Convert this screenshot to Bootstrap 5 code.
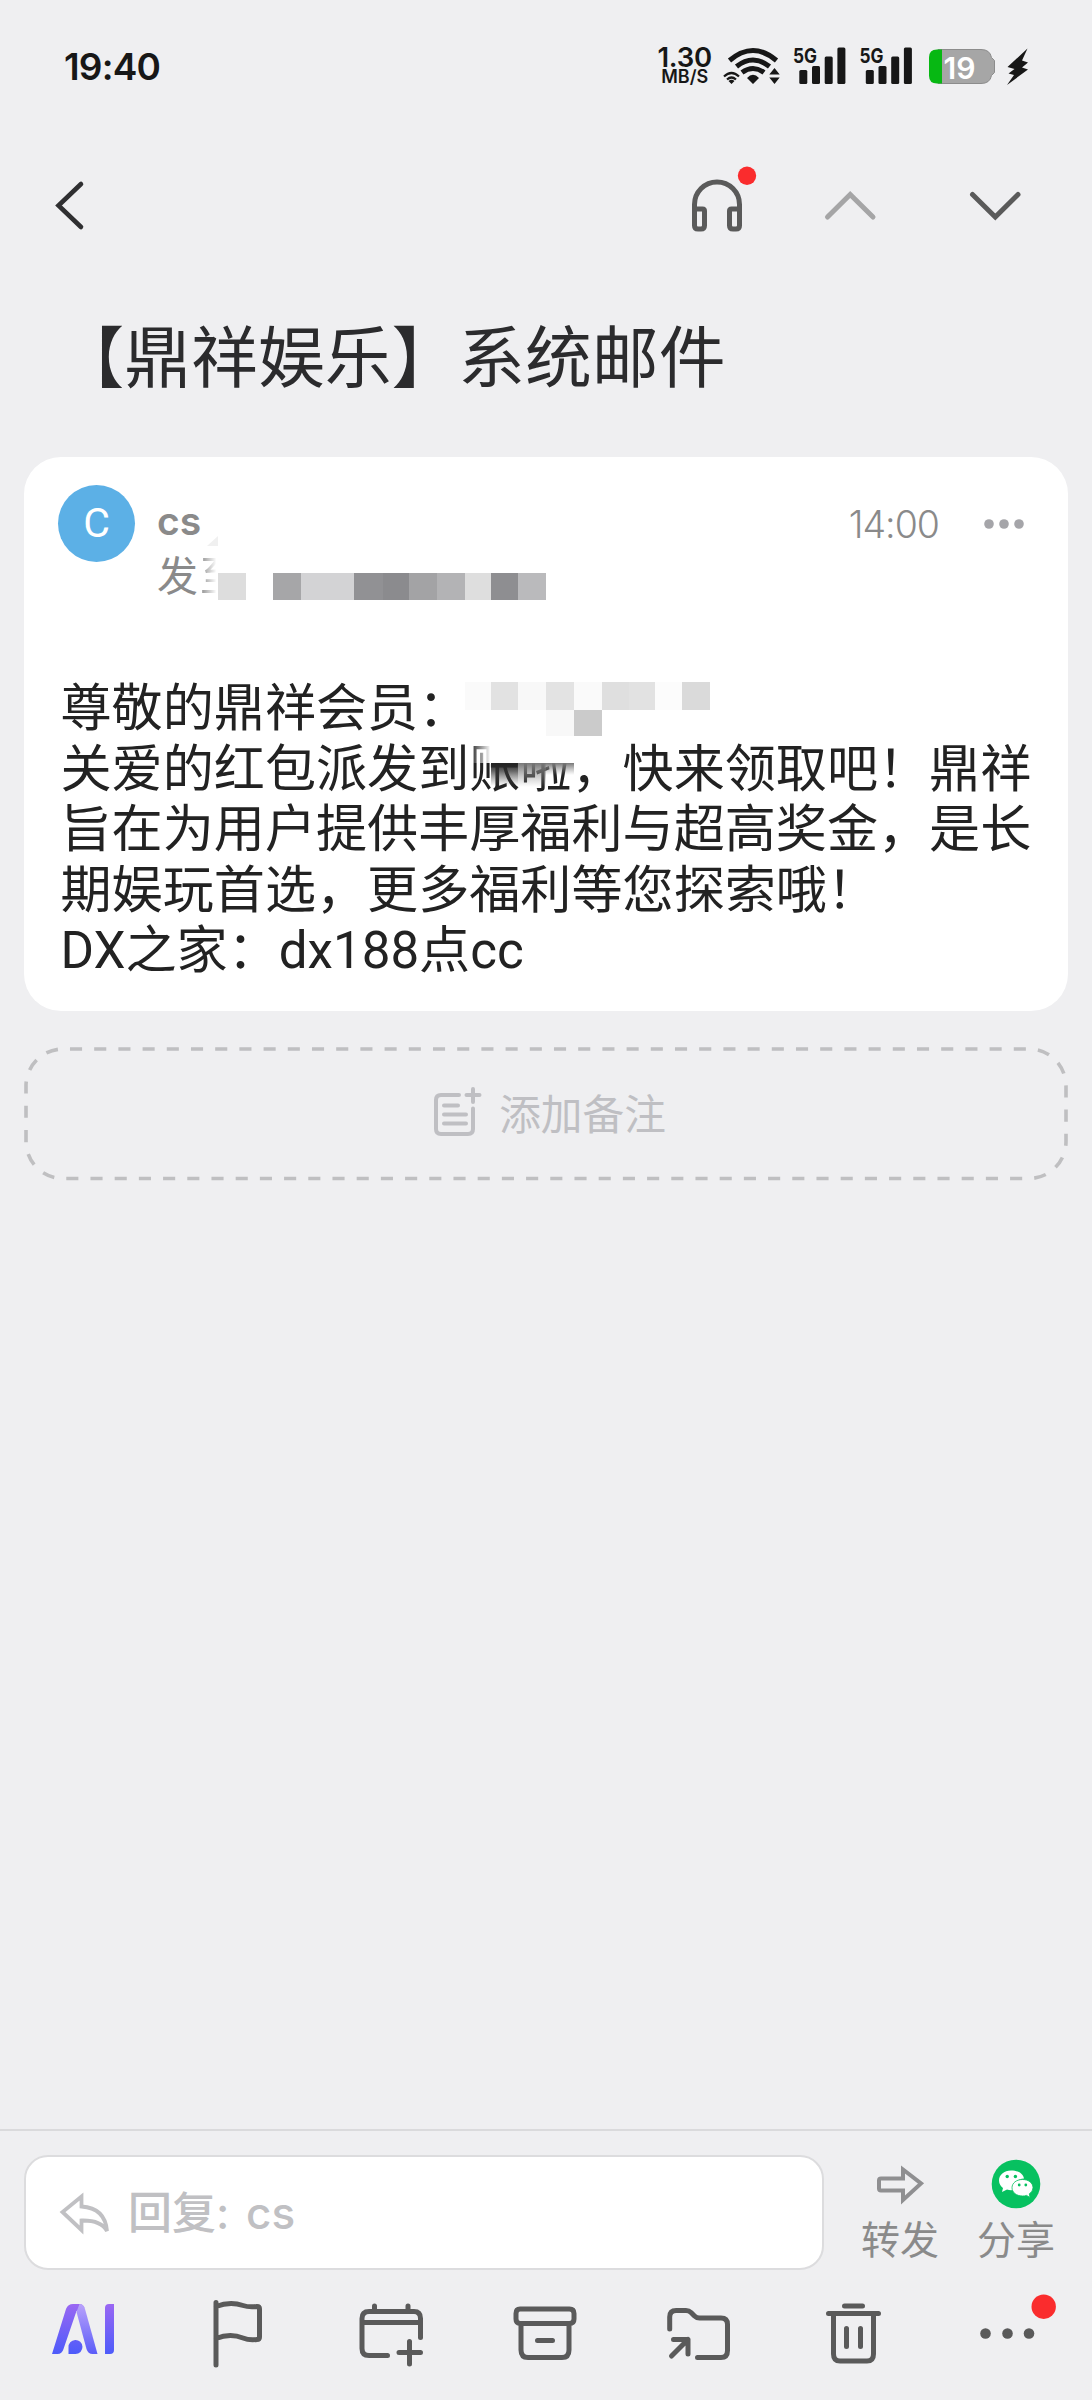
<!DOCTYPE html>
<html lang="zh-CN">
<head>
<meta charset="utf-8">
<meta name="viewport" content="width=device-width, initial-scale=1">
<title>系统邮件</title>
<link rel="stylesheet" href="https://cdn.jsdelivr.net/npm/bootstrap@5.3.0/dist/css/bootstrap.min.css">
<style>
  body { background: #efeff1; color: #2b2b2d; font-family: Inter, "Noto Sans CJK SC", sans-serif; line-height: 1; }
  svg { display: block; flex: none; overflow: visible; }
  .screen { width: 1092px; height: 2400px; }
  .status-bar { height: 132px; padding: 0 64px 0 64px; color: #171717; }
  .clock { font-size: 37px; font-weight: 600; letter-spacing: -.8px; }
  .net-speed { font-size: 27.5px; font-weight: 600; line-height: 21px; height: 22px; letter-spacing: -.2px; }
  .net-unit { font-size: 18px; font-weight: 600; line-height: 16px; height: 16px; }
  .title-bar { height: 148px; padding: 0 66px 0 51px; }
  .subject { height: 177px; padding-left: 57.5px; font-size: 66.8px; line-height: 146px; font-weight: 400; font-family: "Noto Sans CJK SC", sans-serif; white-space: nowrap; }
  .mail { margin: 0 24px; height: 554px; border-radius: 37px; padding: 28px 36px 0 34px; }
  .avatar { width: 77px; height: 77px; background: #5cb0e6; font-size: 41px; font-family: Roboto, sans-serif; }
  .meta { color: #8a8a8a; margin-left: 22px; height: 109px; }
  .sender { font-size: 39px; font-weight: 600; line-height: 48px; margin-top: 12px; }
  .recipient { font-size: 41px; font-weight: 400; line-height: 46px; margin-top: 8px; white-space: nowrap; }
  .faded { -webkit-mask-image: linear-gradient(90deg, #000 0%, transparent 40%); mask-image: linear-gradient(90deg, #000 0%, transparent 40%); margin-left: 2px; }
  .time { font-size: 37.5px; font-weight: 350; color: #8a8a8a; letter-spacing: -1px; margin: 21px 44px 0 auto; }
  .mail-body { margin: 85px -10px 0 2.5px; font-family: Roboto, "Noto Sans CJK SC", sans-serif; font-size: 51.1px; font-weight: 400; line-height: 60.6px; color: #222; white-space: nowrap; }
  .mosaic-a { left: 180px; top: 100px; }
  .mosaic-b { left: 435px; top: 216px; }
  .note { margin: 36px 24px 0; height: 134px; padding-left: 7px; color: #bfbfc3; font-size: 41.7px; font-weight: 400; }
  .note-frame { left: 0; top: 0; }
  .bottom { height: 271px; border-top: 2px solid #dadadc; }
  .composer { padding: 24px 0 0 24px; height: 140px; }
  .reply { width: 800px; height: 115px; border: 2px solid #dcdcde; border-radius: 24px; color: #c0c0c3; font-size: 44px; font-weight: 500; }
  .reply svg { margin-left: 33px; }
  .reply span { margin-left: 17px; white-space: pre; word-spacing: 5px; }
  .act { width: 116px; font-size: 39px; font-weight: 400; color: #8a8a8a; padding-top: 4px; }
  .act span { margin-top: 11px; }
  .act-first { margin-left: 18px; }
  .tools { padding: 0 8px 0 6px; height: 130px; }
</style>
</head>
<body>
<div class="screen d-flex flex-column overflow-hidden">
  <header class="status-bar d-flex justify-content-between align-items-center">
    <div class="clock">19:40</div>
    <div class="d-flex align-items-center">
      <div class="d-flex flex-column align-items-center me-2">
        <span class="net-speed">1.30</span><span class="net-unit">MB/S</span>
      </div>
      <svg width="308" height="40" viewBox="720 46 308 40" fill="#171717" font-family="Inter, sans-serif" font-weight="600">
        <g fill="none" stroke="#171717">
          <path stroke-width="5" d="M729.500 60.500Q753 40.500 776.500 60.500M736.500 66.500Q753 53.500 769.500 66.500M742 72.500Q753 64.500 764 72.500"/>
          <path stroke-width="2.200" d="M724 76.500Q731.500 69.500 739 76.500M727 79.500Q731.500 75.500 736 79.500"/>
        </g>
        <path d="M747 78Q753 71.500 759 78L753 84ZM728.500 81Q731.500 78.500 734.500 81L731.500 84ZM774.500 68l5.200 6.500h-10.400ZM774.500 84l5.200-6.500h-10.400Z"/>
        <g id="sig">
          <text x="793" y="62.500" font-size="20.500" font-weight="700" textLength="24" lengthAdjust="spacingAndGlyphs">5G</text>
          <rect x="799.300" y="70" width="8" height="14" rx="1.500"/><rect x="812" y="66" width="8" height="18" rx="1.500"/><rect x="824.700" y="56.500" width="8" height="27.500" rx="1.500"/><rect x="837.400" y="47.500" width="8" height="36.500" rx="1.500"/>
        </g>
        <use href="#sig" x="66.500"/>
        <path fill="#a6a6a6" stroke="#8c8c8c" d="M938 49.500h43q9 0 10.500 8l3 3v12l-3 3q-1.500 8-10.500 8h-43Z"/>
        <path fill="#07b813" d="M942 49.500h-5q-8 0-8 8v18q0 8 8 8h5Z"/>
        <text x="943.500" y="78.500" font-size="30" fill="#fff" textLength="32" lengthAdjust="spacingAndGlyphs">19</text>
        <path d="M1027.500 48.500L1007.500 67l7 2-6 4.500 5.500 1.500-7 10L1028 69.500l-6-2 6-5-6-2Z"/>
      </svg>
    </div>
  </header>

  <nav class="title-bar d-flex align-items-center justify-content-between">
    <svg width="40" height="60" viewBox="50 176 40 60" fill="none" stroke="#2f2f31" stroke-width="4.600" stroke-linecap="round"><path d="M80 184L57.500 205.500 80 227"/></svg>
    <svg width="340" height="80" viewBox="686 166 340 80" fill="none" stroke="#5a5a5a" stroke-width="5" stroke-linecap="round" stroke-linejoin="round">
      <path d="M694.500 210V204.500a22.500 22.500 0 0 1 45 0V210M694.500 209h8q2 0 2 2v14.500q0 3.500-3.500 3.500h-3q-3.500 0-3.500-3.500ZM739.500 209h-8q-2 0-2 2v14.500q0 3.500 3.500 3.500h3q3.500 0 3.500-3.500Z"/>
      <circle cx="747" cy="175.700" r="9.200" fill="#fa2c2d" stroke="none"/>
      <path stroke="#a5a5a6" stroke-linejoin="miter" d="M827.500 217L850.200 194.500 873 217"/>
      <path stroke-linejoin="miter" d="M972.500 194.500L995.300 217 1018 194.500"/>
    </svg>
  </nav>

  <h1 class="subject m-0">【鼎祥娱乐】系统邮件</h1>

  <article class="mail bg-white position-relative">
    <div class="d-flex align-items-start">
      <div class="avatar rounded-circle text-white d-flex align-items-center justify-content-center">C</div>
      <div class="meta">
        <div class="sender">cs</div>
        <div class="recipient">发<span class="faded d-inline-block">至</span></div>
      </div>
      <div class="time">14:00</div>
      <svg width="49" height="77" viewBox="983 485.500 49 77" fill="#a5a5a9"><circle cx="989" cy="524.500" r="4.800"/><circle cx="1004" cy="524.500" r="4.800"/><circle cx="1019" cy="524.500" r="4.800"/></svg>
    </div>
    <div class="mail-body">尊敬的鼎祥会员：<br>关爱的红包派发到账啦，快来领取吧！鼎祥<br>旨在为用户提供丰厚福利与超高奖金，是长<br>期娱玩首选，更多福利等您探索哦！<br>DX之家：dx188点cc</div>
    <svg class="mosaic-a position-absolute" width="350" height="50" viewBox="204 557 350 50">
      <g shape-rendering="crispEdges">
      <rect x="218" y="573" width="28" height="27" fill="#ddd"/><rect x="273" y="573" width="28" height="27" fill="#a6a6a8"/><rect x="301" y="573" width="53" height="27" fill="#d3d3d5"/><rect x="354" y="573" width="29" height="27" fill="#919194"/><rect x="383" y="573" width="26" height="27" fill="#8b8b8e"/><rect x="409" y="573" width="28" height="27" fill="#a3a3a5"/><rect x="437" y="573" width="28" height="27" fill="#b3b3b5"/><rect x="465" y="573" width="26" height="27" fill="#dedede"/><rect x="491" y="573" width="27" height="27" fill="#8e8e91"/><rect x="518" y="573" width="28" height="27" fill="#bababc"/></g>
      <path d="M207 546L218 536V546Z" fill="#f0f0f0"/>
    </svg>
    <svg class="mosaic-b position-absolute" width="260" height="130" viewBox="459 673 260 130">
      <defs>
        <linearGradient id="d1" x2="0" y2="1"><stop offset="0" stop-color="#222"/><stop offset=".35" stop-color="#333" stop-opacity=".75"/><stop offset="1" stop-color="#555" stop-opacity="0"/></linearGradient>
        <linearGradient id="d2" x2="0" y2="1"><stop offset="0" stop-color="#777"/><stop offset="1" stop-color="#999" stop-opacity="0"/></linearGradient>
        <linearGradient id="cov"><stop offset="0" stop-color="#fff" stop-opacity="0"/><stop offset=".2" stop-color="#fff"/></linearGradient>
      </defs>
      <rect x="470" y="737" width="104" height="26" fill="url(#cov)"/>
      <rect x="574" y="737" width="46" height="16" fill="#fff"/>
      <g shape-rendering="crispEdges">
      <rect x="491" y="763" width="27" height="23" fill="url(#d1)"/><rect x="518" y="763" width="28" height="24" fill="url(#d2)"/><rect x="546" y="763" width="28" height="12" fill="url(#d2)"/>
      <rect x="465" y="682" width="26" height="28" fill="#fafafa"/><rect x="491" y="682" width="27" height="28" fill="#e2e2e2"/><rect x="518" y="682" width="28" height="28" fill="#f8f8f8"/><rect x="546" y="682" width="28" height="28" fill="#e3e3e3"/><rect x="574" y="682" width="28" height="28" fill="#fafafa"/><rect x="602" y="682" width="27" height="28" fill="#dfdfdf"/><rect x="629" y="682" width="26" height="28" fill="#e2e2e2"/><rect x="655" y="682" width="27" height="28" fill="#fcfcfc"/><rect x="682" y="682" width="28" height="28" fill="#dadada"/><rect x="546" y="710" width="28" height="26" fill="#f8f8f8"/><rect x="574" y="710" width="28" height="26" fill="#cbcbcb"/></g>
    </svg>
  </article>

  <div class="note position-relative d-flex align-items-center justify-content-center">
    <svg class="note-frame position-absolute" width="1044" height="134" viewBox="24 1047 1044 134" fill="none" stroke="#bfbfc1" stroke-width="3.600"><path stroke-dasharray="12.100 12.100" d="M26 1142V1086a37 37 0 0 1 37-37H1029a37 37 0 0 1 37 37V1141.500a37 37 0 0 1-37 37H63a37 37 0 0 1-37-37"/></svg>
    <svg class="mb-1" width="50" height="56" viewBox="432 1083 50 56" fill="none" stroke="#bfbfc3" stroke-width="4" stroke-linecap="round" stroke-linejoin="round"><path d="M458 1094H440q-5 0-5 5v29q0 5 5 5h27q5 0 5-5V1107.500M443 1104.500h14M443 1113.500h22M443 1122.500h22M472 1088v13M465.500 1094h13"/></svg>
    <span class="ps-3 pt-1">添加备注</span>
  </div>

  <footer class="bottom mt-auto">
    <div class="composer d-flex">
      <div class="reply bg-white d-flex align-items-center">
        <svg width="52" height="44" viewBox="59 2191 52 44" fill="none" stroke="#c0c0c3" stroke-width="3.800"><path d="M81.500 2196.500V2206.500Q105 2208 107 2231Q101 2220 81.500 2220.500V2230L62.500 2212Z"/></svg>
        <span>回复: cs</span>
      </div>
      <div class="act act-first d-flex flex-column align-items-center">
        <svg width="50" height="50" viewBox="876 2160 50 50" fill="none" stroke="#8f8f91" stroke-width="4"><path d="M904 2170.500V2179.500H882q-2 0-2 2v8q0 2 2 2h22v9.500L922 2184.500Z"/></svg>
        <span>转发</span>
      </div>
      <div class="act d-flex flex-column align-items-center">
        <svg width="50" height="50" viewBox="991 2159.500 50 50"><circle cx="1016" cy="2184.500" r="24.300" fill="#07c160"/>
          <path fill="#fff" d="M1011 2171c-7 0-12 4.500-12 10 0 3.500 2 6 4 7.500l-1 4 5-2.500q3 1 6 .5c0-7 5-11.500 11-11.500-1-5-6-8-13-8Z"/>
          <path fill="#fff" d="M1022.500 2180c-6 0-10.500 3.500-10.500 8.200s4.500 8.300 10.500 8.300q2.500 0 4-.6l3.500 2-.7-3.500q3.700-2.500 3.700-6.200c0-4.700-4.500-8.200-10.500-8.200Z" stroke="#07c160" stroke-width=".8"/>
          <g fill="#07c160"><circle cx="1007.200" cy="2177" r="1.700"/><circle cx="1015.400" cy="2177" r="1.700"/><circle cx="1019.200" cy="2185.500" r="1.400"/><circle cx="1025.800" cy="2185.500" r="1.400"/></g></svg>
        <span>分享</span>
      </div>
    </div>
    <div class="tools row g-0 flex-nowrap">
      <div class="col d-flex justify-content-center"><svg width="100" height="128" viewBox="33 2271 100 128">
        <defs><linearGradient id="ai" x2="0" y2="1"><stop stop-color="#9a67f3"/><stop offset="1" stop-color="#4d5bfa"/></linearGradient><linearGradient id="ai2" x2="0" y2="1"><stop stop-color="#b9a2fb"/><stop offset="1" stop-color="#5b5cf8"/></linearGradient></defs>
        <path fill="url(#ai)" d="M52 2354L66 2309q2-5 7-5h6.500q3.500 0 5 4l-8 3L63.500 2349q-1.500 5-6 5Z"/>
        <path fill="url(#ai2)" d="M79.500 2304q4 0 5.500 5L97.500 2354H92.500q-4.500 0-6-5L76.500 2312Z"/>
        <path fill="url(#ai)" d="M68.500 2354v-6.500a7 7 0 1 1 7 6.500ZM105 2354v-46q0-4 4-4h5v46q0 4-4 4Z"/></svg></div>
      <div class="col d-flex justify-content-center"><svg width="100" height="128" viewBox="188 2271 100 128" fill="none" stroke="#5a5a5a" stroke-width="5" stroke-linecap="round" stroke-linejoin="round"><path d="M217 2302.500V2365M217 2306.500Q231 2301 244 2305.500Q250 2307.500 258 2306.500Q260.500 2306.500 260.500 2309V2337Q260.500 2339.500 258 2339.500Q250 2340.500 244 2338Q231 2333 217 2338.500"/></svg></div>
      <div class="col d-flex justify-content-center"><svg width="100" height="128" viewBox="342 2271 100 128" fill="none" stroke="#5a5a5a" stroke-width="5" stroke-linecap="round" stroke-linejoin="round"><path d="M388.500 2355.500H370q-7 0-7-7V2318.500q0-7 7-7H415q6.500 0 6.500 7V2337.500M363 2322.500H421.500M375.500 2306v5M409 2306v5M410.500 2341.500V2364M400 2352.500H421.500"/></svg></div>
      <div class="col d-flex justify-content-center"><svg width="100" height="128" viewBox="496 2271 100 128" fill="none" stroke="#5a5a5a" stroke-width="5" stroke-linecap="round" stroke-linejoin="round"><path d="M521 2309H570.500q4.500 0 4.500 4.500V2319q0 4.500-4.500 4.500H521q-4-.500-4-4.500V2313.500q0-4.500 4-4.500ZM522 2324V2350q0 7.500 7 7.500H563q7 0 7-7.500V2324M538.500 2340.500H553.500"/></svg></div>
      <div class="col d-flex justify-content-center"><svg width="100" height="128" viewBox="650 2271 100 128" fill="none" stroke="#5a5a5a" stroke-width="5" stroke-linecap="round" stroke-linejoin="round"><path d="M670.700 2329V2317q0-6.500 6.500-6.500H687q3 0 5 2l3.500 3.500q2 2 5 2H722q6.500 0 6.500 6.500V2350.500q0 7-6.500 7H698.500M674.500 2339.500H689V2354M689 2339.500L672.500 2356"/></svg></div>
      <div class="col d-flex justify-content-center"><svg width="100" height="128" viewBox="803 2271 100 128" fill="none" stroke="#5a5a5a" stroke-width="5" stroke-linecap="round" stroke-linejoin="round"><path d="M828.500 2313.500H878.500M844.500 2306H862.500M833.500 2314V2354Q833.500 2361 840 2361H867Q873.500 2361 873.500 2354V2314M846.500 2328.500V2346.500M860.500 2328.500V2346.500"/></svg></div>
      <div class="col d-flex justify-content-center"><svg width="100" height="128" viewBox="957 2271 100 128" fill="#5a5a5a"><circle cx="985.500" cy="2333.500" r="5.300"/><circle cx="1007.500" cy="2333.500" r="5.300"/><circle cx="1029" cy="2333.500" r="5.300"/><circle cx="1043.700" cy="2306.700" r="12.200" fill="#fa2c2d"/></svg></div>
    </div>
  </footer>
</div>
<script src="https://cdn.jsdelivr.net/npm/bootstrap@5.3.0/dist/js/bootstrap.bundle.min.js"></script>
</body>
</html>
